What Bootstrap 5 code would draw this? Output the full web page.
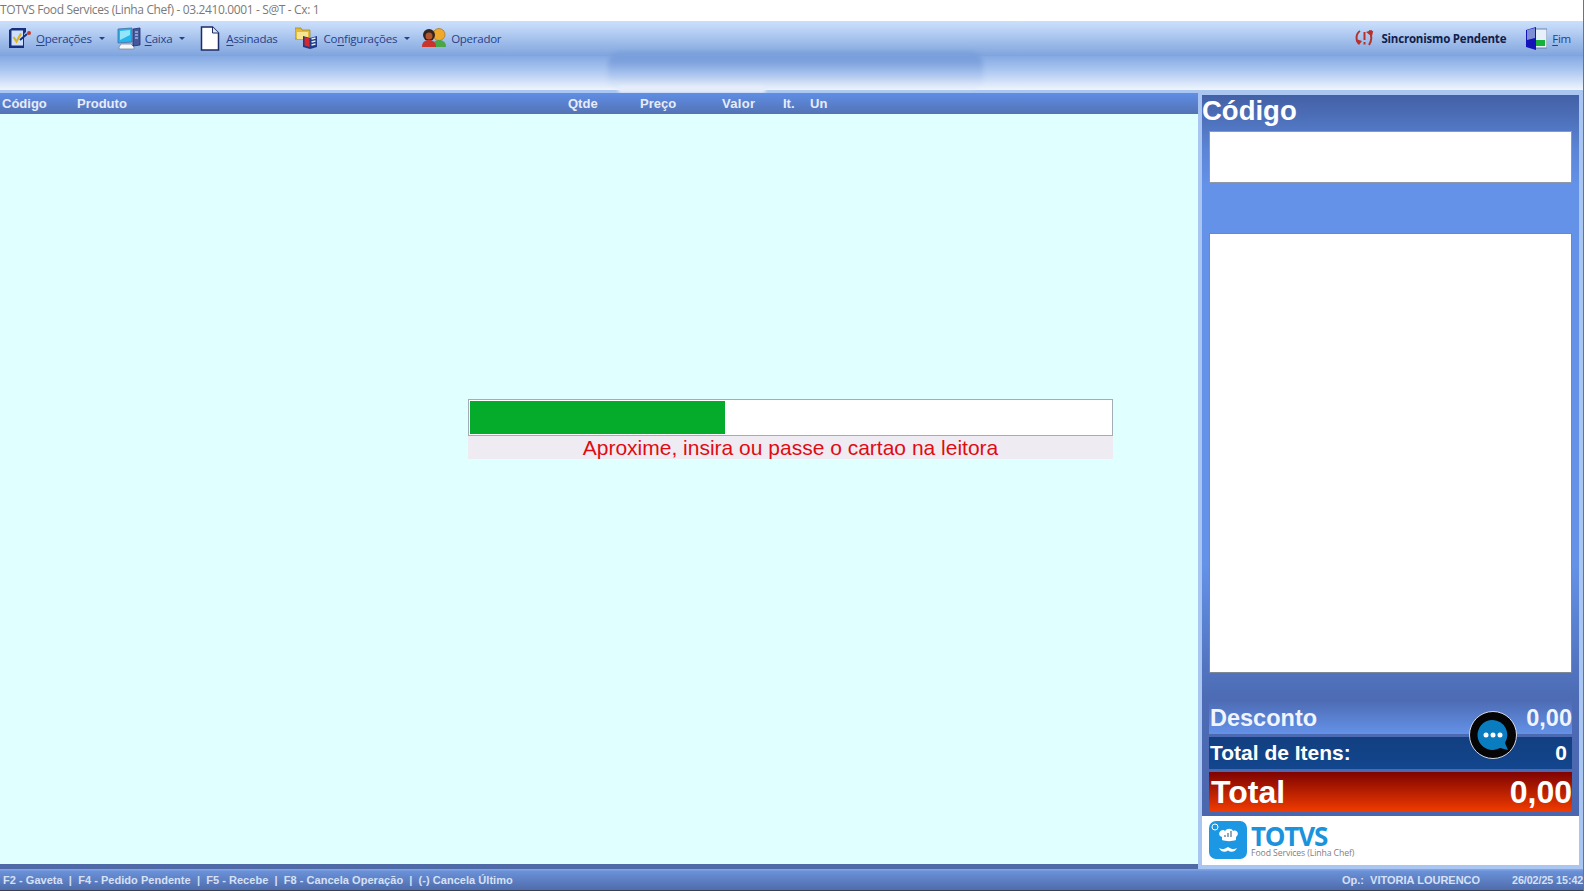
<!DOCTYPE html>
<html lang="pt">
<head>
<meta charset="utf-8">
<title>TOTVS Food Services</title>
<link href="https://cdn.jsdelivr.net/npm/bootstrap@5.3.0/dist/css/bootstrap.min.css" rel="stylesheet">
<style>
html,body{height:891px;overflow:hidden;background:#fff;margin:0}
.app-frame{width:1584px;height:891px;border-right:1px solid #6b7280;position:relative;font-family:"Liberation Sans",Arial,sans-serif}
.title-bar{height:21px;font:12px/19px "Open Sans",sans-serif;color:#7a7a7a;letter-spacing:-.37px;white-space:nowrap;background:#fff}
.tool-bar{height:35px;background:linear-gradient(#cbdffc,#c2d8f8 15%,#7fa4dd);font:11.5px "Open Sans",sans-serif;color:#26418a;letter-spacing:-.25px;padding-left:8px;padding-bottom:1px;white-space:nowrap}
.tool-item{display:flex;align-items:center}
.tool-item svg{display:block;flex:none;filter:blur(.35px)}
.tool-item u{text-underline-offset:2px;text-decoration-thickness:1px}
.tool-caret{width:0;height:0;border:3px solid transparent;border-top:3px solid #26418a;border-bottom:0;margin-left:7px}
.sync-label{font-weight:700;color:#12204a;margin-left:7px;letter-spacing:-.2px}
.sub-band{height:34px;background:linear-gradient(#84a9e3,#a9c5ef 40%,#f0f5fe)}
.band-smear{position:absolute;left:608px;top:52px;width:375px;height:36px;border-radius:12px;background:linear-gradient(#7a9fdc,#7a9fdc 25%,#a9c4ee 62%,#eaf1fc);filter:blur(2px)}
.band-smear-low{position:absolute;left:618px;top:86px;width:148px;height:7px;border-radius:4px;background:#e4edfb;filter:blur(1.5px)}
.work-area{height:779px;background:#a9c6f2}
.left-col{width:1198px;padding-top:3px}
.grid-head{height:21px;background:linear-gradient(#5f8ee6,#5473b4);color:#e6ecf9;font:700 13px/22px "Liberation Sans",Arial,sans-serif;position:relative}
.grid-head span{position:absolute;top:0}
.grid-body{background:#e0ffff;position:relative}
.grid-foot{height:5px;background:#4f6aa6}
.progress-wrap{position:absolute;left:468px;top:285px;width:645px}
.progress-track{height:37px;background:#fff;border:1px solid #a3adb8;padding:1px;border-radius:0}
.progress-fill{background:#05ab2b;height:100%;border-radius:0}
.progress-note{height:23px;background:#efebf3;color:#e00b12;font-size:21px;line-height:23px;text-align:center;white-space:nowrap}
.right-col{width:377px;margin-left:4px;padding-top:5px}
.side-panel{height:721px;padding:0 7px;background:linear-gradient(#4360a5 0,#5b85d6 55px,#6492e8 90px,#6492e8 470px,#4d6cb5 600px,#4a66ae 721px)}
.side-title{height:36px;margin-left:-7px;color:#fff;font:700 27.500px/32px "Liberation Sans",Arial,sans-serif}
.input-box{background:#fff;border:1px solid #8d98a8;height:52px;margin-bottom:50px}
.list-box{background:#fff;border:1px solid #7c8798;height:440px;margin-bottom:27px}
.sum-row{display:flex;justify-content:space-between;align-items:center;color:#fff;font-weight:700;padding:0 0 0 1px}
.sum-discount{height:34px;margin-bottom:3px;padding-top:1px;font-size:23.500px;line-height:34px;color:#f0f4ff;background:linear-gradient(#4d6bb3,#6492e8)}
.sum-items{height:32px;margin-bottom:3px;font-size:21px;background:linear-gradient(#123f80,#12468e);padding-right:5px}
.sum-total{height:40px;font-size:32px;padding-left:2px;background:linear-gradient(#7e0300,#f23c00)}
.logo-box{height:49px;background:#fff;padding:5px 0 0 7px}
.logo-name{font:700 26px/24px "Open Sans",sans-serif;color:#1b93dc;letter-spacing:-1.200px;padding-top:3px;height:27px}
.logo-sub{font:8.700px/10px "Open Sans",sans-serif;color:#7b7f86;letter-spacing:-.1px}
.chat-bubble{position:absolute;left:1469px;top:711px}
.status-bar{height:22px;background:linear-gradient(#86a8e6,#6a90d8 12%,#4f6cab);border-bottom:1px solid #3a4150;color:#d6e1f6;font:700 11px/23px "Liberation Sans",Arial,sans-serif;white-space:nowrap;position:relative}
.status-keys{padding-left:3px;letter-spacing:.035px}
.status-op{margin-left:auto;width:138px;overflow:hidden;margin-right:32px}
.status-date{width:71px;font-size:10.700px;letter-spacing:-.05px}
</style>
</head>
<body>
<div class="app-frame d-flex flex-column">
  <div class="title-bar">TOTVS Food Services (Linha Chef) - 03.2410.0001 - S@T - Cx: 1</div>

  <div class="tool-bar d-flex align-items-center">
    <div class="tool-item">
      <svg width="24" height="24" viewBox="0 0 24 24"><path d="M4 2h14v4l-2 2v14H1V4z" fill="#16307f"/><rect x="3.500" y="4.500" width="11.500" height="15" fill="#cfe0ff"/><path d="M5.500 11l3 4.500 4.500-8" fill="none" stroke="#d9b61e" stroke-width="2.200"/><path d="M12 14l7-6" stroke="#16307f" stroke-width="2"/><circle cx="21" cy="7" r="2" fill="#c5392b"/></svg>
      <span class="ms-1"><u>O</u>perações</span><i class="tool-caret"></i>
    </div>
    <div class="tool-item" style="margin-left:12px">
      <svg width="24" height="24" viewBox="0 0 24 24"><path d="M1 3l14-1v14l-14 1z" fill="#25b4ec" stroke="#4a6aa0" stroke-width=".8"/><path d="M3 5l10-1v5L3 14z" fill="#92e6fb"/><path d="M4 18h10l3 3v2H2v-2z" fill="#f4f6fa" stroke="#7c88a0" stroke-width=".8"/><path d="M16 3l7-1v17l-7 1z" fill="#44599c" stroke="#1f2d70" stroke-width=".8"/><path d="M18 6h3M18 9h3M18 12h3" stroke="#dbe3f6"/></svg>
      <span class="ms-1"><u>C</u>aixa</span><i class="tool-caret"></i>
    </div>
    <div class="tool-item" style="margin-left:15px">
      <svg width="20" height="25" viewBox="0 0 20 25"><path d="M1.500 1h11l6 6v17h-17z" fill="#fff" stroke="#1c2b66" stroke-width="1.500"/><path d="M12.500 1v6h6" fill="#dfe7f5" stroke="#1c2b66"/></svg>
      <span style="margin-left:6px"><u>A</u>ssinadas</span>
    </div>
    <div class="tool-item" style="margin-left:17px">
      <svg width="24" height="22" viewBox="0 0 24 22"><path d="M0 1h6l1 2h8v9H0z" fill="#e3bb38" stroke="#9b8020" stroke-width=".7"/><path d="M2 5h11v7H2z" fill="#f7e48e"/><path d="M8 9l7 2 7-2v11l-7 2-7-2z" fill="#1f3a88"/><path d="M9.500 10l5 1.500v8.500l-5-1.500z" fill="#d8262c"/><path d="M16.500 12l4-1M16.500 15l4-1M16.500 18l4-1" stroke="#e5edfb" stroke-width="1.300"/></svg>
      <span style="margin-left:5px">Co<u>n</u>figurações</span><i class="tool-caret"></i>
    </div>
    <div class="tool-item" style="margin-left:12px">
      <svg width="24" height="20" viewBox="0 0 24 20"><circle cx="17" cy="6.500" r="6" fill="#f0a92a" stroke="#a8701a" stroke-width=".7"/><path d="M11 19c0-5 2-7 6-7s7 2 7 7z" fill="#4aa648"/><circle cx="7" cy="7" r="6" fill="#33241e"/><circle cx="7" cy="8" r="3.500" fill="#b5552e"/><path d="M0 19c0-5 3-7 7-7s7 2 7 7z" fill="#c8352c"/></svg>
      <span style="margin-left:5px">Operador</span>
    </div>
    <div class="tool-item ms-auto">
      <svg width="19" height="18" viewBox="0 0 19 18"><path d="M5 2C2 4 1 8 2 12l2 3M14 2l3 1-1 4c1 4 0 6-2 9" fill="none" stroke="#b8322c" stroke-width="2"/><path d="M1 10l3 6 3-4zM11 3l6-2-1 6z" fill="#b8322c"/><path d="M9.500 3v8M9.500 13v2.500" stroke="#b8322c" stroke-width="2"/></svg>
      <span class="sync-label">Sincronismo Pendente</span>
    </div>
    <div class="tool-item" style="margin-left:20px;margin-right:12px">
      <svg width="21" height="23" viewBox="0 0 21 23"><rect x="8" y="2" width="13" height="19" fill="#e6f0fb" stroke="#5d6d93" stroke-width=".8"/><rect x="10" y="13" width="9" height="6" fill="#16b13a"/><path d="M0 3l10-3v23L0 20z" fill="#1414b8"/><path d="M1 3l8-2v10l-8 2z" fill="#7f8fd6"/></svg>
      <span style="margin-left:5px"><u>F</u>im</span>
    </div>
  </div>

  <div class="sub-band"></div>
  <div class="band-smear"></div>
  <div class="band-smear-low"></div>

  <div class="work-area d-flex">
    <div class="left-col d-flex flex-column">
      <div class="grid-head">
        <span style="left:2px">Código</span>
        <span style="left:77px">Produto</span>
        <span style="left:568px">Qtde</span>
        <span style="left:640px">Preço</span>
        <span style="left:722px;letter-spacing:.3px">Valor</span>
        <span style="left:783px">It.</span>
        <span style="left:810px">Un</span>
      </div>
      <div class="grid-body flex-grow-1">
        <div class="progress-wrap">
          <div class="progress progress-track">
            <div class="progress-bar progress-fill" style="width:39.800%"></div>
          </div>
          <div class="progress-note">Aproxime, insira ou passe o cartao na leitora</div>
        </div>
      </div>
      <div class="grid-foot"></div>
    </div>

    <div class="right-col">
      <div class="side-panel">
        <div class="side-title">Código</div>
        <div class="input-box"></div>
        <div class="list-box"></div>
        <div class="sum-row sum-discount"><span>Desconto</span><span>0,00</span></div>
        <div class="sum-row sum-items"><span>Total de Itens:</span><span>0</span></div>
        <div class="sum-row sum-total"><span>Total</span><span>0,00</span></div>
      </div>
      <div class="logo-box d-flex">
        <svg width="38" height="38" viewBox="0 0 38 38"><rect width="38" height="38" rx="7" fill="#1b97e3"/><circle cx="6" cy="6" r="3" fill="none" stroke="#fff"/><path d="M11 15c-3-4 3-8 5-5 2-3 7-3 8 0 4-2 7 3 3 6v3c-4 1.500-10 1.500-14 0v-3z" fill="#fff"/><path d="M16 16v-2M19 16v-4M22 16v-6" stroke="#5b7d8f" stroke-width="1.300"/><path d="M10 27c3 2 6 1 9-1 3 2 6 3 9 1-2 4-6 5-9 2.500-3 2.500-7 1.500-9-2.500z" fill="#fff"/></svg>
        <div style="margin-left:4px">
          <div class="logo-name">TOTVS</div>
          <div class="logo-sub">Food Services (Linha Chef)</div>
        </div>
      </div>
    </div>
  </div>

  <div class="chat-bubble">
    <svg width="48" height="48" viewBox="0 0 48 48"><circle cx="24" cy="24" r="23.500" fill="#050505" stroke="#d5d9e2"/><path d="M24 9a15 15 0 1 0 7 28l8 2-3-7A15 15 0 0 0 24 9z" fill="#0a7cc0"/><circle cx="17" cy="24" r="2.500" fill="#fff"/><circle cx="24" cy="24" r="2.500" fill="#fff"/><circle cx="31" cy="24" r="2.500" fill="#fff"/></svg>
  </div>

  <div class="status-bar d-flex">
    <div class="status-keys">F2 - Gaveta&nbsp; | &nbsp;F4 - Pedido Pendente&nbsp; | &nbsp;F5 - Recebe&nbsp; | &nbsp;F8 - Cancela Operação&nbsp; | &nbsp;(-) Cancela Último</div>
    <div class="status-op">Op.:&nbsp; VITORIA LOURENCO DE</div>
    <div class="status-date">26/02/25 15:42</div>
  </div>
</div>
<script src="https://cdn.jsdelivr.net/npm/bootstrap@5.3.0/dist/js/bootstrap.bundle.min.js"></script>
</body>
</html>
